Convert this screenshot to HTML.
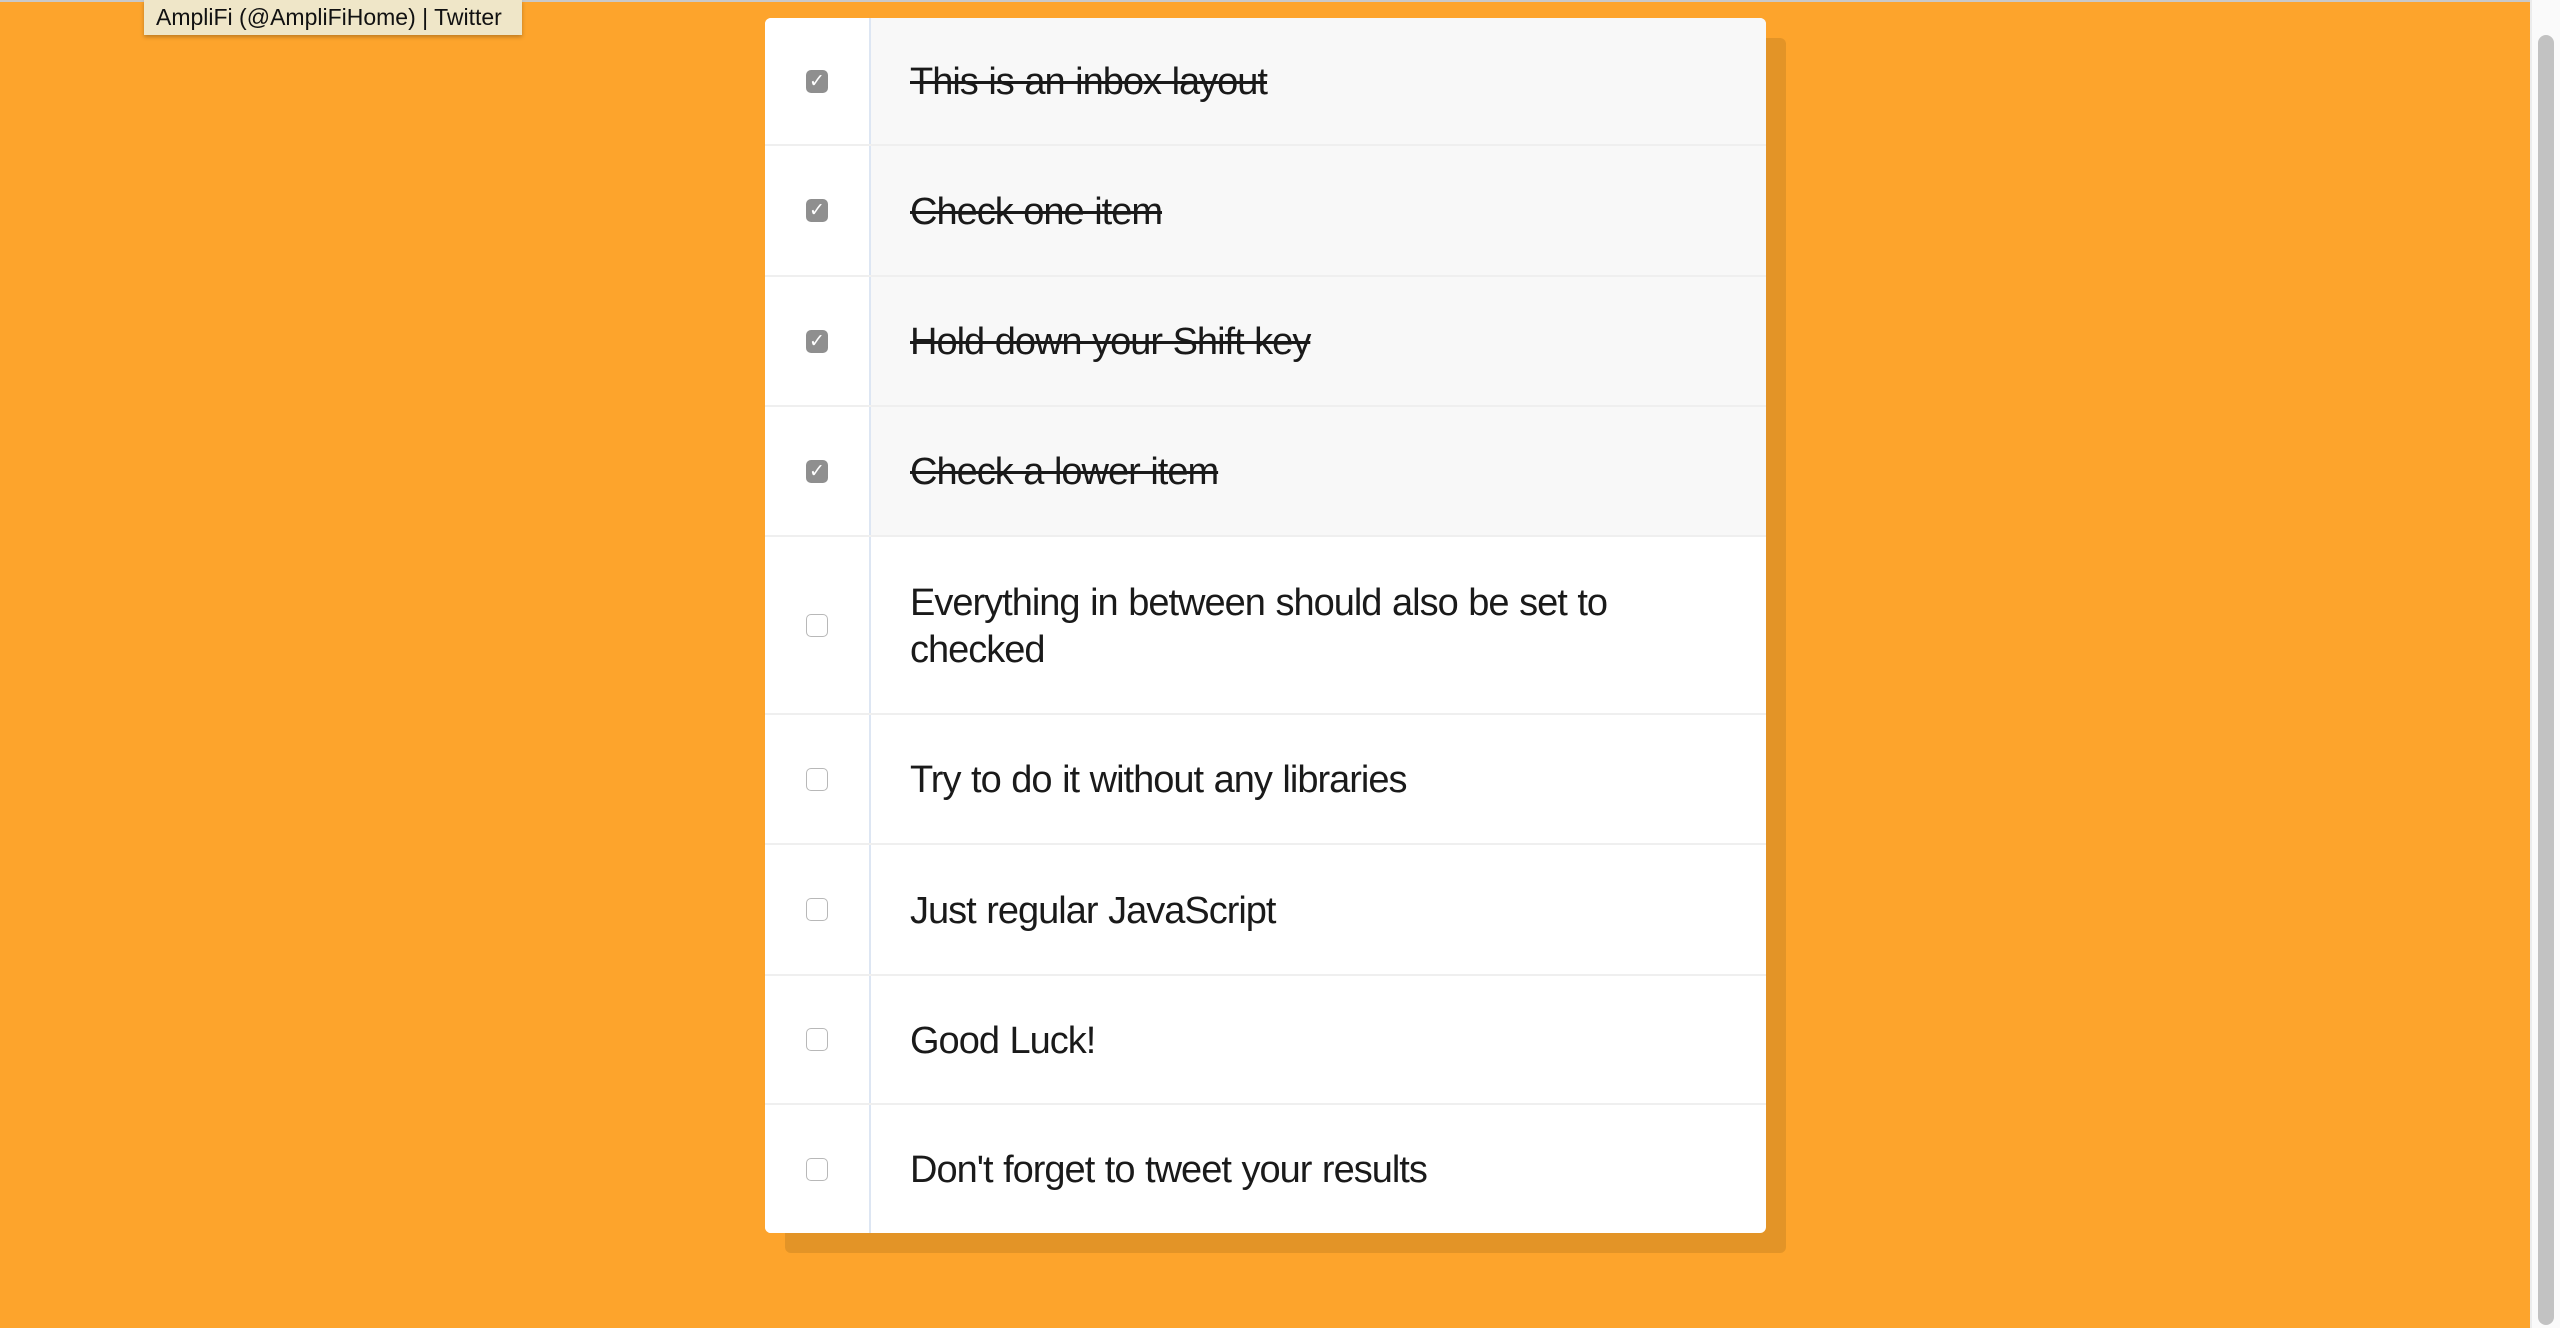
<!DOCTYPE html>
<html><head><meta charset="utf-8"><style>
html,body{margin:0;padding:0;width:2560px;height:1328px;overflow:hidden;background:#fda42c;font-family:"Liberation Sans",Helvetica,Arial,sans-serif;}
.topline{position:absolute;left:0;top:0;width:2530px;height:2px;background:#c9c9c9;}
.tip{position:absolute;left:144px;top:0;width:378px;height:35px;background:#efe6c8;box-shadow:0 2px 4px rgba(0,0,0,.25);font-size:23px;letter-spacing:0;line-height:34px;color:#111;padding-left:12px;box-sizing:border-box;white-space:nowrap;}
.shadow{position:absolute;left:785px;top:38px;width:1001px;height:1215px;background:#e39427;border-radius:6px;}
.card{position:absolute;left:765px;top:18px;width:1001px;height:1215px;background:#fff;border-radius:6px;overflow:hidden;}
.row{display:flex;border-bottom:2px solid #efefef;box-sizing:border-box;}
.row:last-child{border-bottom:none}
.cb{width:106px;border-right:2px solid #dde6f3;box-sizing:border-box;display:flex;align-items:center;justify-content:center;background:#fff;}
.box{width:22px;height:23px;border:1px solid #b8b8b8;border-radius:5px;background:#fff;box-sizing:border-box;}
.row.c .box{background:#8f8f8f;border-color:#8f8f8f;color:#fff;font-size:19px;line-height:22px;text-align:center;}
.tx{flex:1;display:flex;align-items:center;padding-left:39px;padding-top:3px;font-size:38px;line-height:47px;color:#1a1a1a;letter-spacing:-1px;word-spacing:1px;}
.row.c .tx{background:#f8f8f8;text-decoration:line-through;}
.sb{position:absolute;left:2530px;top:0;width:30px;height:1328px;background:#fafafa;border-left:2px solid #ececec;box-sizing:border-box;}
.th{position:absolute;left:2538px;top:35px;width:16px;height:1290px;background:#c2c2c2;border-radius:8px;}
</style></head><body>
<div class="topline"></div>
<div class="shadow"></div>
<div class="card">
<div class="row c" style="height:128px"><div class="cb"><div class="box">✓</div></div><div class="tx">This is an inbox layout</div></div>
<div class="row c" style="height:131px"><div class="cb"><div class="box">✓</div></div><div class="tx">Check one item</div></div>
<div class="row c" style="height:130px"><div class="cb"><div class="box">✓</div></div><div class="tx">Hold down your Shift key</div></div>
<div class="row c" style="height:130px"><div class="cb"><div class="box">✓</div></div><div class="tx">Check a lower item</div></div>
<div class="row" style="height:178px"><div class="cb"><div class="box"></div></div><div class="tx">Everything in between should also be set to<br>checked</div></div>
<div class="row" style="height:130px"><div class="cb"><div class="box"></div></div><div class="tx">Try to do it without any libraries</div></div>
<div class="row" style="height:131px"><div class="cb"><div class="box"></div></div><div class="tx">Just regular JavaScript</div></div>
<div class="row" style="height:129px"><div class="cb"><div class="box"></div></div><div class="tx">Good Luck!</div></div>
<div class="row" style="height:128px"><div class="cb"><div class="box"></div></div><div class="tx">Don't forget to tweet your results</div></div>
</div>
<div class="tip">AmpliFi (@AmpliFiHome) | Twitter</div>
<div class="sb"></div><div class="th"></div>
</body></html>
